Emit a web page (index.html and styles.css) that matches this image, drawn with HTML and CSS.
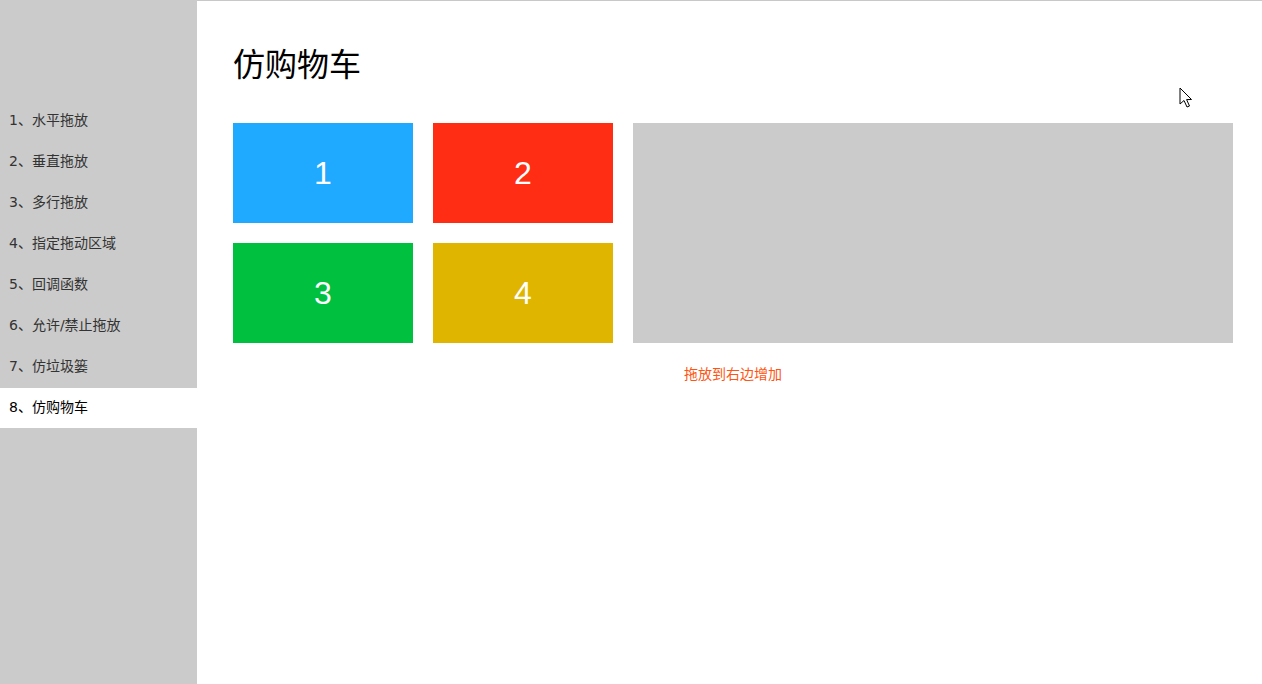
FILE: index.html
```html
<!DOCTYPE html>
<html lang="zh">
<head>
<meta charset="utf-8">
<link rel="stylesheet" href="styles.css">
</head>
<body>
<div class="page">
  <aside class="sidebar">
    <ul class="menu">
      <li>1、水平拖放</li>
      <li>2、垂直拖放</li>
      <li>3、多行拖放</li>
      <li>4、指定拖动区域</li>
      <li>5、回调函数</li>
      <li>6、允许/禁止拖放</li>
      <li>7、仿垃圾篓</li>
      <li class="active">8、仿购物车</li>
    </ul>
  </aside>
  <main class="main">
    <h1 class="title">仿购物车</h1>
    <div class="stage">
      <div class="items">
        <div class="item blue">1</div>
        <div class="item red">2</div>
        <div class="item green">3</div>
        <div class="item yellow">4</div>
      </div>
      <div class="cart"></div>
    </div>
    <p class="hint">拖放到右边增加</p>
  </main>
  <svg class="cursor" width="14" height="22" viewBox="0 0 14 22">
    <path d="M1 1 L1 17 L5 13.5 L8 20 L10.5 19 L7.6 12.6 L12.5 12.5 Z" fill="#fff" stroke="#000" stroke-width="1" stroke-linejoin="round"/>
  </svg>
</div>
</body>
</html>
```

FILE: styles.css
```css
* { box-sizing: border-box; }
html, body { margin: 0; padding: 0; }
body {
  font-family: "Noto Sans CJK SC", "Liberation Sans", sans-serif;
  background: #fff;
  width: 1262px;
  height: 684px;
  overflow: hidden;
}
.page {
  position: relative;
  display: flex;
  height: 684px;
  border-top: 1px solid #c8c8c8;
}
.sidebar {
  width: 197px;
  flex: none;
  background: #cbcbcb;
  margin-top: -1px;
  padding-top: 101px;
}
.menu {
  list-style: none;
  margin: 0;
  padding: 0;
}
.menu li {
  height: 40px;
  margin-bottom: 1px;
  line-height: 38px;
  padding-left: 9px;
  font-size: 14px;
  color: #333;
  font-family: "DejaVu Sans", "Noto Sans CJK SC", sans-serif;
}
.menu li.active {
  background: #fff;
  color: #000;
}
.main {
  flex: 1;
  padding-left: 36px;
}
.title {
  margin: 0;
  padding-top: 38px;
  height: 122px;
  font-size: 32px;
  line-height: 46px;
  font-weight: normal;
  color: #000;
}
.stage {
  display: flex;
  gap: 20px;
}
.items {
  display: grid;
  grid-template-columns: 180px 180px;
  grid-auto-rows: 100px;
  gap: 20px;
}
.item {
  display: flex;
  align-items: center;
  justify-content: center;
  color: #fff;
  font-family: "Liberation Sans", Arial, sans-serif;
  font-size: 32px;
}
.blue { background: #1fa9ff; }
.red { background: #ff2d14; }
.green { background: #00c040; }
.yellow { background: #e0b500; }
.cart {
  width: 600px;
  height: 220px;
  background: #cbcbcb;
}
.hint {
  width: 1000px;
  margin: 20px 0 0;
  text-align: center;
  font-size: 14px;
  line-height: 20px;
  color: #ff5511;
}
.cursor {
  position: absolute;
  left: 1179px;
  top: 86px;
}
```
